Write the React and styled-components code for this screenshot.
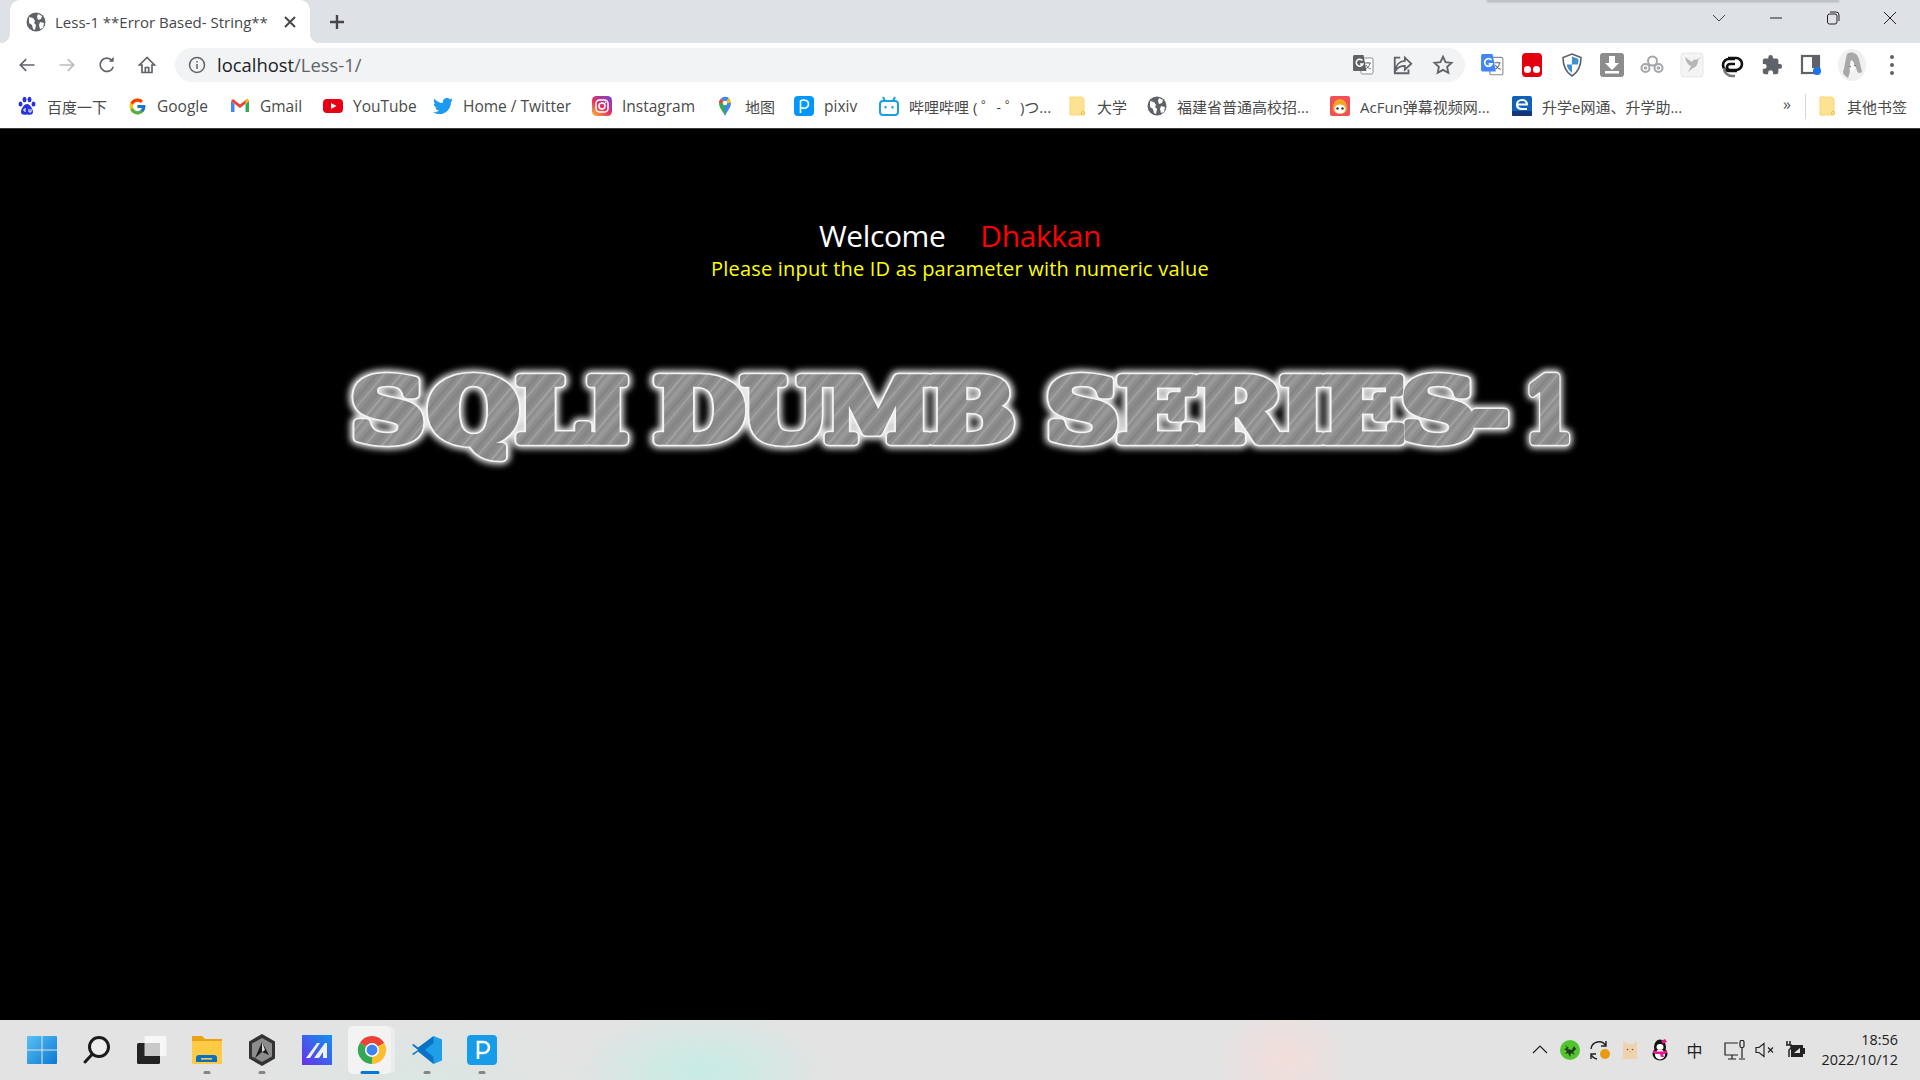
import React from "react";
import styled, { createGlobalStyle } from "styled-components";
import { FaTwitter } from "react-icons/fa";
import { FcGoogle } from "react-icons/fc";

const UI_FONT = `"Open Sans", "Noto Sans", "Noto Sans CJK SC", sans-serif`;

const GlobalStyle = createGlobalStyle`
  html, body { margin: 0; padding: 0; height: 100%; background: #000; }
  * { box-sizing: border-box; }
  #root { height: 100%; }
`;

const Screen = styled.div`
  width: 1920px;
  height: 1080px;
  display: flex;
  flex-direction: column;
  overflow: hidden;
  font-family: ${UI_FONT};
`;

/* browser chrome */
const TabStrip = styled.div`
  position: relative;
  height: 43px;
  display: flex;
  align-items: stretch;
  padding: 0 2px 0 10px;
  background: #dee1e6;
`;

const WindowShadow = styled.div`
  position: absolute;
  top: 0;
  left: 1487px;
  width: 352px;
  height: 2px;
  background: #a9abae;
  filter: blur(1px);
`;

const Tab = styled.div`
  position: relative;
  width: 300px;
  display: flex;
  align-items: center;
  padding-left: 16px;
  background: #fff;
  border-radius: 10px 10px 0 0;

  &::before, &::after {
    content: "";
    position: absolute;
    bottom: 0;
    width: 10px;
    height: 10px;
  }
  &::before { left: -10px; background: radial-gradient(circle at 0 0, #dee1e6 10px, #fff 10.5px); }
  &::after { right: -10px; background: radial-gradient(circle at 100% 0, #dee1e6 10px, #fff 10.5px); }
`;

const TabTitle = styled.span`
  width: 212px;
  margin-left: 9px;
  font-size: 15px;
  color: #45474a;
  white-space: nowrap;
`;

const TabClose = styled.span`
  display: flex;
  margin-left: 16px;
`;

const NewTab = styled.span`
  display: flex;
  align-items: center;
  margin-left: 18px;
`;

const WindowControls = styled.div`
  margin-left: auto;
  display: flex;
  align-items: flex-start;
`;

const WindowButton = styled.span`
  width: 57px;
  height: 36px;
  display: flex;
  align-items: center;
  justify-content: center;
`;

const Toolbar = styled.div`
  height: 43px;
  display: flex;
  align-items: center;
  padding: 0 8px 0 7px;
  background: #fff;
`;

const ToolButton = styled.span`
  width: 40px;
  height: 36px;
  flex: none;
  display: flex;
  align-items: center;
  justify-content: center;
`;

const Omnibox = styled.div`
  flex: 1;
  height: 34px;
  margin: 1px 7px 0 8px;
  padding: 0 2px 0 13px;
  display: flex;
  align-items: center;
  border-radius: 17px;
  background: #f1f3f4;
`;

const Url = styled.div`
  flex: 1;
  margin-left: 11px;
  padding-bottom: 2px;
  font-size: 18.4px;
  color: #5f6368;
`;

const UrlHost = styled.span`
  color: #202124;
`;

const Bookmarks = styled.div`
  height: 43px;
  display: flex;
  align-items: center;
  padding: 0 12px 2px 17px;
  background: #fff;
  border-bottom: 1px solid #3c4043;
`;

const Bookmark = styled.div`
  width: ${(p) => p.$w}px;
  flex: none;
  display: flex;
  align-items: center;
  gap: 10px;
  font-size: ${(p) => (p.$latin ? 15.5 : 15)}px;
  color: #4a4a4a;
  white-space: nowrap;
`;

const BookmarkIcon = styled.span`
  width: 20px;
  height: 20px;
  flex: none;
  display: flex;
  align-items: center;
  justify-content: center;
`;

const Overflow = styled.span`
  margin-left: auto;
  font-size: 16px;
  color: #555;
  line-height: 1;
  padding-bottom: 5px;
`;

const Divider = styled.span`
  width: 1px;
  height: 25px;
  margin: 0 11px 0 14px;
  background: #d5d6d8;
`;

/* page */
const Page = styled.main`
  flex: 1;
  background: #000;
  display: flex;
  flex-direction: column;
  align-items: center;
  padding-top: 85px;
`;

const Welcome = styled.div`
  font-size: 30px;
  line-height: 44px;
  color: #fff;
  letter-spacing: -0.4px;
  white-space: nowrap;
`;

const Name = styled.span`
  margin-left: 35px;
  color: #f00;
`;

const Prompt = styled.div`
  margin-top: 1px;
  font-size: 20px;
  line-height: 20px;
  color: #ff0;
  letter-spacing: 0.2px;
`;

const TitleArt = styled.svg`
  display: block;
  margin-top: 78px;
  font-family: "DejaVu Serif", serif;
  font-weight: 700;
`;

/* taskbar */
const Taskbar = styled.footer`
  height: 60px;
  display: flex;
  align-items: center;
  padding: 0 22px 0 14px;
  background:
    radial-gradient(ellipse 130px 60px at 700px 50px, #c6ece4 0%, rgba(198, 236, 228, 0) 100%),
    radial-gradient(ellipse 160px 70px at 420px 60px, #dbe6e3 0%, rgba(219, 230, 227, 0) 100%),
    radial-gradient(ellipse 70px 60px at 1285px 40px, #f2dedb 0%, rgba(242, 222, 219, 0) 100%),
    #e3e3e3;
`;

const TaskSlot = styled.div`
  position: relative;
  width: ${(p) => (p.$active ? 43 : 55)}px;
  height: 48px;
  flex: none;
  display: flex;
  align-items: center;
  justify-content: center;
  margin: ${(p) => (p.$active ? "0 8px 0 4px" : "0")};
  padding-left: ${(p) => (p.$active ? 5 : 0)}px;
  border-radius: 5px;
  background: ${(p) => (p.$active ? "#f3f3f3" : "transparent")};
  box-shadow: ${(p) => (p.$active ? "5px 0 0 -1px #ebebeb" : "none")};

  &::after {
    content: "";
    display: ${(p) => (p.$dot || p.$active ? "block" : "none")};
    position: absolute;
    bottom: 0;
    left: 50%;
    width: ${(p) => (p.$active ? 19 : 7)}px;
    height: 3px;
    transform: translateX(-50%);
    border-radius: 2px;
    background: ${(p) => (p.$active ? "#0078d4" : "#858585")};
  }
`;

const Tray = styled.div`
  margin-left: auto;
  display: flex;
  align-items: center;
`;

const TrayIcon = styled.span`
  width: 30px;
  flex: none;
  display: flex;
  justify-content: center;
`;

const ImeGlyph = styled.span`
  width: 45px;
  padding-right: 6px;
  text-align: center;
  font-family: "Noto Sans CJK SC", sans-serif;
  font-size: 16px;
  color: #222;
`;

const Clock = styled.div`
  margin-left: 8px;
  width: 80px;
  text-align: right;
  font-size: 14.4px;
  line-height: 20px;
  color: #222;
`;

const Glyph = ({ size = 20, view = 24, children, stroke = "#5f6368", sw = 2 }) => (
  <svg width={size} height={size} viewBox={`0 0 ${view} ${view}`} fill="none" stroke={stroke} strokeWidth={sw}>
    {children}
  </svg>
);

const Globe = ({ c = "#5f6368" }) => (
  <svg width="20" height="20" viewBox="0 0 20 20">
    <circle cx="10" cy="10" r="9.5" fill={c} />
    <path d="M3 5l4 1 2 3-1 2 2 2-1 5-2-1-1-4-3-2zM12 2l4 2-1 3-3 1-1-3zM14 10l4 1-1 5-3 1-1-4z" fill="#fff" />
  </svg>
);

const Folder = () => (
  <svg width="20" height="20" viewBox="0 0 20 20">
    <path d="M3 1h12l2 2v16H3z" fill="#fde293" stroke="#fbd56e" />
    <circle cx="16" cy="17" r="1.6" fill="#fde293" stroke="#f2c14e" />
  </svg>
);

const GmailIcon = () => (
  <svg width="20" height="20" viewBox="0 0 20 20">
    <path d="M1 5v11h3.5V8z" fill="#4285f4" />
    <path d="M19 5v11h-3.5V8z" fill="#34a853" />
    <path d="M1 5l9 7 9-7-2-2-7 5.5L3 3z" fill="#ea4335" />
    <path d="M15.5 8L19 5l-2-2-1.5 1z" fill="#fbbc04" />
  </svg>
);

const YouTubeIcon = () => (
  <svg width="20" height="20" viewBox="0 0 20 20">
    <rect y="3" width="20" height="14" rx="4" fill="#e60012" />
    <path d="M8 7l5.5 3L8 13z" fill="#fff" />
  </svg>
);

const InstagramIcon = () => (
  <svg width="20" height="20" viewBox="0 0 20 20">
    <defs>
      <linearGradient id="ig" x1="0.1" y1="1" x2="0.9" y2="0">
        <stop offset="0" stopColor="#fdb13c" />
        <stop offset="0.45" stopColor="#e3325f" />
        <stop offset="1" stopColor="#7a3fd0" />
      </linearGradient>
    </defs>
    <rect width="20" height="20" rx="4.5" fill="url(#ig)" />
    <rect x="4" y="4" width="12" height="12" rx="3.5" fill="none" stroke="#fff" strokeWidth="1.5" />
    <circle cx="10" cy="10" r="3" fill="none" stroke="#fff" strokeWidth="1.5" />
    <circle cx="13.6" cy="6.4" r="0.9" fill="#fff" />
  </svg>
);

const MapsIcon = () => (
  <svg width="20" height="20" viewBox="0 0 20 20">
    <path d="M10 20C8 15 4 12 4 7h6z" fill="#34a853" />
    <path d="M10 20c2-5 6-8 6-13h-6z" fill="#4285f4" />
    <path d="M4 7a6 6 0 0 1 2-4.5L10 7z" fill="#ea4335" />
    <path d="M6 2.5A6 6 0 0 1 14 2l-4 5z" fill="#4285f4" />
    <path d="M14 2a6 6 0 0 1 2 5h-6z" fill="#fbbc04" />
    <circle cx="10" cy="7" r="2.3" fill="#fff" />
  </svg>
);

const PixivIcon = () => (
  <svg width="20" height="20" viewBox="0 0 20 20">
    <rect width="20" height="20" rx="4" fill="#0096fa" />
    <path d="M6.5 17V4.5M6.5 5c2-1.5 8-1.5 8 3s-5 5-7 3.5" fill="none" stroke="#fff" strokeWidth="1.6" />
  </svg>
);

const BiliIcon = () => (
  <svg width="20" height="20" viewBox="0 0 20 20" fill="none" stroke="#1a9fe0">
    <rect x="1" y="5" width="18" height="14" rx="3" strokeWidth="2" />
    <path d="M6 5L4 1M14 5l2-4" strokeWidth="2" />
    <path d="M6.5 10v2.5M13.5 10v2.5" strokeWidth="2" />
  </svg>
);

const BaiduIcon = () => (
  <svg width="20" height="20" viewBox="0 0 20 20" fill="#2932e1">
    <ellipse cx="3.5" cy="8" rx="2" ry="2.6" />
    <ellipse cx="7.5" cy="3.5" rx="2" ry="2.7" />
    <ellipse cx="12.5" cy="3.5" rx="2" ry="2.7" />
    <ellipse cx="16.5" cy="8" rx="2" ry="2.6" />
    <path d="M10 8c3 0 6 5 6 8 0 3-3 3-6 2.500-3 .5-6 .5-6-2.500 0-3 3-8 6-8z" />
    <path d="M8 12v4M6 14h2M12 13v3h2v-3" stroke="#fff" fill="none" />
  </svg>
);

const AcFunIcon = () => (
  <svg width="20" height="20" viewBox="0 0 20 20">
    <rect width="20" height="20" rx="2" fill="#f04f5a" />
    <path d="M3 12c0-6 4-9 7-9s7 3 7 9c0 4-3 6-7 6s-7-2-7-6z" fill="#f5a623" />
    <ellipse cx="10" cy="13" rx="5.500" ry="4.500" fill="#fff" />
    <circle cx="7.500" cy="12.500" r="1.200" fill="#333" />
    <circle cx="12.500" cy="12.500" r="1.200" fill="#333" />
  </svg>
);

const EduIcon = () => (
  <svg width="20" height="20" viewBox="0 0 20 20">
    <rect width="20" height="20" rx="2" fill="#0f62b8" />
    <rect y="15" width="20" height="5" rx="1" fill="#12357c" />
    <path d="M5 8.500h10a5 4.500 0 0 0-10 0c0 3 2 4.500 5 4.500h5" fill="none" stroke="#fff" strokeWidth="2.200" />
  </svg>
);

const TranslateIcon = ({ size = 22, dim }) => (
  <svg width={size} height={size} viewBox="0 0 22 22">
    <rect x="9" y="4" width="12" height="16" rx="1.500" fill="#fff" stroke="#8a8d91" />
    <path d="M13 9h6M16 8v1M18 9c-.5 3-2.500 5-4.500 6M14 11c1 2 3 3.500 5 4" stroke="#6d7074" fill="none" />
    <path d="M2.500 1h9l3 16h-12A1.500 1.500 0 0 1 1 15.500v-13A1.500 1.500 0 0 1 2.500 1z" fill={dim ? "#5f6368" : "#4285f4"} />
    <path d="M10.500 6.500A3.500 3.500 0 1 0 11 10H8" fill="none" stroke="#fff" strokeWidth="1.500" />
  </svg>
);

const ShieldIcon = () => (
  <svg width="22" height="24" viewBox="0 0 22 24">
    <path d="M11 1l9 3.500c0 8-2 14-9 18.500C4 18.500 2 12.500 2 4.500z" fill="#fff" stroke="#5b6168" strokeWidth="1.600" />
    <path d="M11 3.500l6.500 2.500c0 2-.2 3.800-.6 5.500H11zM11 11.500v8.500c-3-2.500-4.600-5-5.300-8.500z" fill="#3f8fd2" />
  </svg>
);

const DownloadIcon = () => (
  <svg width="24" height="24" viewBox="0 0 24 24">
    <rect width="24" height="24" rx="3" fill="#8b8c8e" />
    <path d="M9 3h6v7h4l-7 7-7-7h4z" fill="#fff" />
    <rect x="5" y="18" width="14" height="2.500" fill="#fff" />
  </svg>
);

const RingsIcon = () => (
  <svg width="24" height="20" viewBox="0 0 24 20" fill="none" stroke="#a3a5a8" strokeWidth="2">
    <circle cx="5.500" cy="13" r="4" />
    <circle cx="12.500" cy="6" r="4.500" />
    <circle cx="18.500" cy="13" r="4" />
    <circle cx="5.500" cy="13" r="0.800" />
    <circle cx="18.500" cy="13" r="0.800" />
  </svg>
);

const BirdIcon = () => (
  <svg width="24" height="26" viewBox="0 0 24 26">
    <rect x="1" y="1" width="22" height="24" rx="3" fill="#f4f4f4" stroke="#e6e6e6" />
    <path d="M21 5l-5 3c-2-1-3 0-4 2L5 5c1 5 3 8 6 9l-3 6 5-4c4-1 5-5 5-8z" fill="#b5b7b9" />
  </svg>
);

const SwirlIcon = () => (
  <svg width="24" height="26" viewBox="0 0 24 26" fill="none" strokeWidth="2.600">
    <path d="M16 18H8a6 6 0 0 1 0-12h6" stroke="#111" transform="translate(1 1)" />
    <path d="M8 6h8a6 6 0 0 1 0 12h-6a3 3 0 0 1 0-6h5" stroke="#111" />
    <path d="M4 16a8 8 0 0 0 8 8h3" stroke="#777" />
  </svg>
);

const PuzzleIcon = () => (
  <svg width="22" height="22" viewBox="0 0 24 24" fill="#5f6368">
    <path d="M20.500 11H19V7a2 2 0 0 0-2-2h-4V3.500a2.500 2.500 0 0 0-5 0V5H4a2 2 0 0 0-2 2v3.800h1.500a2.700 2.700 0 0 1 0 5.400H2V20a2 2 0 0 0 2 2h3.800v-1.500a2.700 2.700 0 0 1 5.400 0V22H17a2 2 0 0 0 2-2v-4h1.500a2.500 2.500 0 0 0 0-5z" />
  </svg>
);

const SidePanelIcon = () => (
  <svg width="24" height="24" viewBox="0 0 24 24">
    <rect x="2" y="3" width="17" height="17" fill="none" stroke="#5f6368" strokeWidth="2.200" />
    <rect x="12" y="3" width="7" height="12" fill="#5f6368" />
    <circle cx="17" cy="18" r="4" fill="#1a73e8" />
  </svg>
);

const AvatarIcon = () => (
  <svg width="28" height="32" viewBox="0 0 28 32">
    <ellipse cx="14" cy="16" rx="14" ry="16" fill="#f0f0f0" />
    <path d="M9 5c5-3 10-1 12 5l3 13c-2 2-4 1-5-1-1-5-3-8-5-10-1 5-2 12-4 17-3-2-5-4-5-6 2-5 2-12 4-18z" fill="#a8a8a8" />
    <path d="M13 11c3 1 4 6 3 10l-4 2c-1-4 0-8 1-12z" fill="#fafafa" />
    <path d="M11 17l2 1M16 16l2 1" stroke="#666" />
  </svg>
);

const Kebab = () => (
  <svg width="6" height="22" viewBox="0 0 6 22" fill="#5f6368">
    <circle cx="3" cy="3" r="2" />
    <circle cx="3" cy="11" r="2" />
    <circle cx="3" cy="19" r="2" />
  </svg>
);

const RedExtIcon = () => (
  <svg width="22" height="24" viewBox="0 0 22 24">
    <rect x="1" width="20" height="24" rx="4" fill="#e3000f" />
    <circle cx="6.500" cy="16.500" r="3.600" fill="#fff" />
    <circle cx="15.500" cy="16.500" r="3.600" fill="#fff" />
  </svg>
);

const WindowsLogo = () => (
  <svg width="30" height="30" viewBox="0 0 30 30">
    <defs>
      <linearGradient id="win" x1="0" y1="0" x2="1" y2="1">
        <stop offset="0" stopColor="#5ac1f5" />
        <stop offset="1" stopColor="#0a78d2" />
      </linearGradient>
    </defs>
    <path d="M1 1h13.500v13.500H0V2a1 1 0 0 1 1-1zM15.500 1H29a1 1 0 0 1 1 1v12.500H15.500zM0 15.500h14.500V29H1a1 1 0 0 1-1-1zM15.500 15.500H30V28a1 1 0 0 1-1 1H15.500z" fill="url(#win)" />
  </svg>
);

const SearchGlyph = () => (
  <svg width="30" height="30" viewBox="0 0 30 30" fill="none" stroke="#1b1b1b" strokeWidth="3">
    <circle cx="17" cy="12" r="9.500" fill="#eeeeee" />
    <path d="M10 19.500L3 27" strokeLinecap="round" />
  </svg>
);

const TaskViewIcon = () => (
  <svg width="30" height="30" viewBox="0 0 30 30">
    <rect x="7.500" y="1" width="22" height="20" rx="1.500" fill="#f7f7f7" />
    <rect x="0" y="8" width="23" height="21" rx="1.500" fill="#232323" />
    <rect x="7.500" y="8" width="15.500" height="13" fill="#c9c9c9" />
  </svg>
);

const ExplorerIcon = () => (
  <svg width="32" height="30" viewBox="0 0 32 30">
    <path d="M1 1h10l3 3h17v6H1z" fill="#e8a317" />
    <path d="M1 6h30v23H1z" fill="#ffcb45" />
    <path d="M5 27v-4a3 3 0 0 1 3-3h15a3 3 0 0 1 3 3v4z" fill="#0a6fc2" />
    <rect x="10" y="23" width="11" height="1.600" fill="#ffcb45" />
  </svg>
);

const HexIcon = () => (
  <svg width="28" height="32" viewBox="0 0 28 32">
    <path d="M14 0l13 7.500v17L14 32 1 24.500v-17z" fill="#333" />
    <path d="M14 4l10 5.500v13L14 28 4 22.500v-13z" fill="#8d8d8d" />
    <path d="M14 8l7 13-7-3-7 6z" fill="#1e1e1e" />
    <path d="M14 8l3 8-3 2z" fill="#dcdcdc" />
  </svg>
);

const IaIcon = () => (
  <svg width="30" height="30" viewBox="0 0 30 30">
    <defs>
      <linearGradient id="ia" x1="0" y1="1" x2="1" y2="0">
        <stop offset="0" stopColor="#6a30e8" />
        <stop offset="1" stopColor="#1192ee" />
      </linearGradient>
    </defs>
    <rect width="30" height="30" fill="url(#ia)" />
    <path d="M4 23L15 8h3L8 23zM12 23L23 8h2v15h-4v-6l-4 6z" fill="#eef1fb" />
  </svg>
);

const ChromeIcon = () => (
  <svg width="30" height="30" viewBox="0 0 32 32">
    <path d="M16 16L3 8.500A15 15 0 0 1 29 8.500z" fill="#ea4335" />
    <path d="M16 16L29 8.500A15 15 0 0 1 16 31z" fill="#fbc02d" />
    <path d="M16 16L16 31A15 15 0 0 1 3 8.500z" fill="#34a853" />
    <circle cx="16" cy="16" r="7.500" fill="#fff" />
    <circle cx="16" cy="16" r="5.800" fill="#3f83f1" />
  </svg>
);

const VsCodeIcon = () => (
  <svg width="30" height="30" viewBox="0 0 30 30">
    <path d="M21.500 1L30 4.500v21L21.500 29 9 16.500z" fill="#1e9fe8" />
    <path d="M21.500 8L13 15l8.500 7V29L6 16.500 1.500 20 0 19l6-4-6-5 1.500-1L6 12.500 21.500 1z" fill="#0a72c4" />
  </svg>
);

const PIcon = () => (
  <svg width="30" height="30" viewBox="0 0 30 30">
    <rect width="30" height="30" rx="4" fill="#169ce8" />
    <path d="M11 24V7h5.500a5.500 5.500 0 0 1 0 11H11" fill="none" stroke="#fff" strokeWidth="2.600" />
  </svg>
);

const RazerIcon = () => (
  <svg width="20" height="20" viewBox="0 0 20 20">
    <circle cx="10" cy="10" r="10" fill="#52c42f" />
    <path d="M5 5l4 3-2 1 5 1 2-4 2 3-3 3 2 3-4-2-1 4-2-4-3 1 2-3-3-2 3-1z" fill="#1c3b18" />
  </svg>
);

const SyncIcon = () => (
  <svg width="22" height="22" viewBox="0 0 22 22" fill="none" stroke="#222" strokeWidth="1.400">
    <path d="M2 10a8 8 0 0 1 15-3M17 2v5h-5" />
    <path d="M8 20a8 8 0 0 1-6-5M2 20v-5h5" />
    <circle cx="16" cy="15" r="5" fill="#e69b12" stroke="none" />
  </svg>
);

const CatIcon = () => (
  <svg width="20" height="20" viewBox="0 0 20 20">
    <path d="M3 1l4 3h6l4-3v18H1l2-2z" fill="#f0d3ae" />
    <circle cx="7.500" cy="9.500" r="0.800" fill="#7a5a3c" />
    <circle cx="12.500" cy="9.500" r="0.800" fill="#7a5a3c" />
    <path d="M9 11.500h2l-1 1z" fill="#c98a70" />
  </svg>
);

const QQIcon = () => (
  <svg width="18" height="22" viewBox="0 0 18 22">
    <ellipse cx="9" cy="8" rx="6" ry="7.500" fill="#111" />
    <ellipse cx="9" cy="15" rx="7.500" ry="6.500" fill="#111" />
    <ellipse cx="9" cy="15.500" rx="5" ry="5" fill="#fff" />
    <ellipse cx="9" cy="8" rx="3.500" ry="3" fill="#fff" />
    <path d="M6 9l3 1.500L12 9l-3 2z" fill="#f5a623" />
    <path d="M2 11c4 2 10 2 14 0v3c-2 1-3 1-4 1l1 3h-3l-1-3c-2 0-5 0-7-1z" fill="#e5178f" />
    <path d="M10 2l4-2 2 3-3 1-1 1z" fill="#e5178f" />
  </svg>
);

const MonitorIcon = () => (
  <svg width="22" height="20" viewBox="0 0 22 20" fill="none" stroke="#222" strokeWidth="1.200">
    <path d="M14 15H1V3h13" />
    <path d="M4 19h8M8 15v4" />
    <rect x="16" y="0.500" width="4" height="7" rx="1.500" />
    <path d="M18 7.500V18M15 19h6" />
  </svg>
);

const MuteIcon = () => (
  <svg width="20" height="16" viewBox="0 0 20 16" fill="none" stroke="#222" strokeWidth="1.200">
    <path d="M1 5.500h3l5-4v13l-5-4H1z" />
    <path d="M13 5.500l5 5M18 5.500l-5 5" />
  </svg>
);

const BatteryIcon = () => (
  <svg width="20" height="18" viewBox="0 0 20 18">
    <rect x="6" y="4" width="12" height="12" fill="#222" />
    <rect x="18" y="7" width="2" height="6" fill="#222" />
    <path d="M2 0v4M5 0v4M1 4h5v3l-2 2v7" fill="none" stroke="#222" strokeWidth="1.500" />
    <path d="M9 12l6-5v5z" fill="#e3e3e3" />
  </svg>
);

const bookmarks = [
  { label: "百度一下", icon: <BaiduIcon />, w: 110 },
  { label: "Google", icon: <FcGoogle size={19} />, w: 103, latin: true },
  { label: "Gmail", icon: <GmailIcon />, w: 93, latin: true },
  { label: "YouTube", icon: <YouTubeIcon />, w: 110, latin: true },
  { label: "Home / Twitter", icon: <FaTwitter size={20} color="#1d9bf0" />, w: 159, latin: true },
  { label: "Instagram", icon: <InstagramIcon />, w: 123, latin: true },
  { label: "地图", icon: <MapsIcon />, w: 79 },
  { label: "pixiv", icon: <PixivIcon />, w: 85, latin: true },
  { label: "哔哩哔哩 ( ゜- ゜)つ...", icon: <BiliIcon />, w: 188 },
  { label: "大学", icon: <Folder />, w: 80 },
  { label: "福建省普通高校招...", icon: <Globe />, w: 183 },
  { label: "AcFun弹幕视频网...", icon: <AcFunIcon />, w: 182 },
  { label: "升学e网通、升学助...", icon: <EduIcon /> },
];

// measured left edge and width of each letter of the banner
const titleLetters = [
  ["S", 351, 74], ["Q", 428, 91], ["L", 516, 73], ["I", 587, 41],
  ["D", 654, 91], ["U", 741, 88], ["M", 825, 107], ["B", 928, 87],
  ["S", 1046, 73], ["E", 1117, 82], ["R", 1195, 89], ["I", 1280, 45],
  ["E", 1321, 84], ["S", 1401, 75], ["-", 1471, 38], ["1", 1524, 49],
];

const TitleLetters = () =>
  titleLetters.map(([c, x, w]) => (
    <text
      key={x}
      x={x - 340}
      y="84"
      fontSize="86"
      textLength={w}
      lengthAdjust="spacingAndGlyphs"
    >
      {c}
    </text>
  ));

const App = () => (
  <Screen>
    <GlobalStyle />
    <TabStrip>
      <WindowShadow />
      <Tab>
        <Globe />
        <TabTitle>Less-1 **Error Based- String**</TabTitle>
        <TabClose>
          <Glyph size={14} view={14} stroke="#45474a">
            <path d="M2 2l10 10M12 2L2 12" />
          </Glyph>
        </TabClose>
      </Tab>
      <NewTab>
        <Glyph size={18} view={18} stroke="#45474a" sw={2.400}>
          <path d="M9 2v14M2 9h14" />
        </Glyph>
      </NewTab>
      <WindowControls>
        <WindowButton>
          <Glyph size={14} view={14} stroke="#45474a" sw={1}>
            <path d="M1 4l6 6 6-6" />
          </Glyph>
        </WindowButton>
        <WindowButton>
          <Glyph size={14} view={14} stroke="#222" sw={1}>
            <path d="M1 7h12" />
          </Glyph>
        </WindowButton>
        <WindowButton>
          <Glyph size={14} view={14} stroke="#222" sw={1}>
            <rect x="1.500" y="3" width="9.500" height="10" rx="2" />
            <path d="M4 1h6a3 3 0 0 1 3 3v6" />
          </Glyph>
        </WindowButton>
        <WindowButton>
          <Glyph size={14} view={14} stroke="#222" sw={1}>
            <path d="M1 1l12 12M13 1L1 13" />
          </Glyph>
        </WindowButton>
      </WindowControls>
    </TabStrip>

    <Toolbar>
      <ToolButton>
        <Glyph>
          <path d="M21 12H4M11 5l-7 7 7 7" />
        </Glyph>
      </ToolButton>
      <ToolButton>
        <Glyph stroke="#babcbe">
          <path d="M3 12h17M13 5l7 7-7 7" />
        </Glyph>
      </ToolButton>
      <ToolButton>
        <Glyph>
          <path d="M19.500 14a8 8 0 1 1-1.600-7.500" />
          <path d="M20 2v6h-6" fill="#5f6368" stroke="none" />
        </Glyph>
      </ToolButton>
      <ToolButton>
        <Glyph>
          <path d="M12 3L3 12h3v9h12v-9h3zM10 21v-6h4v6" />
        </Glyph>
      </ToolButton>
      <Omnibox>
        <Glyph size={18} view={18} sw={1.500}>
          <circle cx="9" cy="9" r="7.500" />
          <path d="M9 8v5M9 5v1.500" />
        </Glyph>
        <Url>
          <UrlHost>localhost</UrlHost>/Less-1/
        </Url>
        <ToolButton>
          <TranslateIcon dim />
        </ToolButton>
        <ToolButton>
          <Glyph size={22}>
            <path d="M14 4l7 6.500-7 6.500v-4c-5 0-8 2-10 5 0-6 4-10 10-10.500zM9 4H3v17h15v-4" />
          </Glyph>
        </ToolButton>
        <ToolButton>
          <Glyph size={22}>
            <path d="M12 3l2.800 6 6.500.7-4.800 4.400 1.300 6.400L12 17.300l-5.800 3.200 1.300-6.400L2.700 9.700 9.200 9z" />
          </Glyph>
        </ToolButton>
      </Omnibox>
      <ToolButton>
        <TranslateIcon size={24} />
      </ToolButton>
      <ToolButton>
        <RedExtIcon />
      </ToolButton>
      <ToolButton>
        <ShieldIcon />
      </ToolButton>
      <ToolButton>
        <DownloadIcon />
      </ToolButton>
      <ToolButton>
        <RingsIcon />
      </ToolButton>
      <ToolButton>
        <BirdIcon />
      </ToolButton>
      <ToolButton>
        <SwirlIcon />
      </ToolButton>
      <ToolButton>
        <PuzzleIcon />
      </ToolButton>
      <ToolButton>
        <SidePanelIcon />
      </ToolButton>
      <ToolButton>
        <AvatarIcon />
      </ToolButton>
      <ToolButton>
        <Kebab />
      </ToolButton>
    </Toolbar>

    <Bookmarks>
      {bookmarks.map((b) => (
        <Bookmark key={b.label} $w={b.w} $latin={b.latin}>
          <BookmarkIcon>{b.icon}</BookmarkIcon>
          {b.label}
        </Bookmark>
      ))}
      <Overflow>»</Overflow>
      <Divider />
      <Bookmark $w={91}>
        <BookmarkIcon>
          <Folder />
        </BookmarkIcon>
        其他书签
      </Bookmark>
    </Bookmarks>

    <Page>
      <Welcome>
        Welcome
        <Name>Dhakkan</Name>
      </Welcome>
      <Prompt>Please input the ID as parameter with numeric value</Prompt>
      <TitleArt width="1240" height="125" viewBox="0 0 1240 125">
        <defs>
          <pattern id="brushed" width="31" height="31" patternUnits="userSpaceOnUse" patternTransform="rotate(40)">
            <rect width="31" height="31" fill="#8e8e8e" />
            <rect width="4" height="31" fill="#999" />
            <rect x="7" width="3" height="31" fill="#858585" />
            <rect x="13" width="2" height="31" fill="#9f9f9f" />
            <rect x="18" width="5" height="31" fill="#878787" />
            <rect x="26" width="2" height="31" fill="#a2a2a2" />
          </pattern>
          <filter id="glow" x="-5%" y="-30%" width="110%" height="160%">
            <feGaussianBlur stdDeviation="3" />
          </filter>
          <filter id="soft" x="-2%" y="-5%" width="104%" height="110%">
            <feGaussianBlur stdDeviation="0.6" />
          </filter>
        </defs>
        <g fill="#e8e8e8" stroke="#e8e8e8" strokeWidth="15" strokeLinejoin="round" filter="url(#glow)">
          <TitleLetters />
        </g>
        <g fill="#f4f4f4" stroke="#f4f4f4" strokeWidth="10.500" strokeLinejoin="round">
          <TitleLetters />
        </g>
        <g fill="url(#brushed)" stroke="url(#brushed)" strokeWidth="7.500" strokeLinejoin="round" filter="url(#soft)">
          <TitleLetters />
        </g>
      </TitleArt>
    </Page>

    <Taskbar>
      <TaskSlot>
        <WindowsLogo />
      </TaskSlot>
      <TaskSlot>
        <SearchGlyph />
      </TaskSlot>
      <TaskSlot>
        <TaskViewIcon />
      </TaskSlot>
      <TaskSlot $dot>
        <ExplorerIcon />
      </TaskSlot>
      <TaskSlot $dot>
        <HexIcon />
      </TaskSlot>
      <TaskSlot>
        <IaIcon />
      </TaskSlot>
      <TaskSlot $active>
        <ChromeIcon />
      </TaskSlot>
      <TaskSlot $dot>
        <VsCodeIcon />
      </TaskSlot>
      <TaskSlot $dot>
        <PIcon />
      </TaskSlot>
      <Tray>
        <TrayIcon>
          <Glyph size={18} view={18} stroke="#222" sw={1.200}>
            <path d="M2 12l7-7 7 7" />
          </Glyph>
        </TrayIcon>
        <TrayIcon>
          <RazerIcon />
        </TrayIcon>
        <TrayIcon>
          <SyncIcon />
        </TrayIcon>
        <TrayIcon>
          <CatIcon />
        </TrayIcon>
        <TrayIcon>
          <QQIcon />
        </TrayIcon>
        <ImeGlyph>中</ImeGlyph>
        <TrayIcon>
          <MonitorIcon />
        </TrayIcon>
        <TrayIcon>
          <MuteIcon />
        </TrayIcon>
        <TrayIcon>
          <BatteryIcon />
        </TrayIcon>
        <Clock>
          18:56
          <br />
          2022/10/12
        </Clock>
      </Tray>
    </Taskbar>
  </Screen>
);

export default App;
